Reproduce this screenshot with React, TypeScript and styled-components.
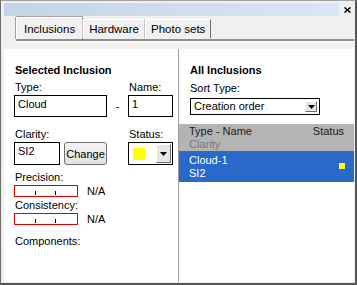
import React from "react";
import styled, { createGlobalStyle } from "styled-components";

const GlobalStyle = createGlobalStyle`
  html, body { margin: 0; padding: 0; background: #f0f0f0; }
  body {
    font-family: "Liberation Sans", Arial, sans-serif;
    font-size: 11px;
    color: #000;
  }
  * { box-sizing: border-box; }
`;

const Window = styled.div`
  width: 357px;
  height: 285px;
  background: #f0f0f0;
  border-top: 1px solid #a0a0a0;
  border-left: 1px solid #6a6a6a;
  border-right: 2px solid #555;
  border-bottom: 2px solid #555;
  padding: 2px 0 0 3px;
  display: flex;
  flex-direction: column;
`;

const TitleRow = styled.div`
  display: flex;
  align-items: center;
  height: 13px;
`;

const TitleBar = styled.div`
  width: 335px;
  height: 13px;
  background: linear-gradient(to right, #c4d4e6, #dae6f4);
`;

const Close = styled.div`
  margin-left: 5px;
  display: flex;
  align-items: center;
`;

const TabStrip = styled.div`
  margin: 1px 1px 0 12px;
  height: 24px;
  display: flex;
  align-items: flex-end;
  border-bottom: 2px solid #8e8e8e;
  box-shadow: 0 1px 0 #fff;
`;

const Tab = styled.div<{ $active?: boolean }>`
  height: ${(p) => (p.$active ? 22 : 19)}px;
  margin-bottom: ${(p) => (p.$active ? 0 : 1)}px;
  padding: 0 ${(p) => (p.$active ? 7 : 5)}px;
  display: flex;
  align-items: center;
  font-size: 11.5px;
  color: #000;
  background: #f0f0f0;
  border-top: 1px solid #fff;
  border-left: 1px solid #fff;
  border-right: 1px solid #6d6d6d;
  box-shadow: ${(p) =>
    p.$active ? "-1px 0 0 #a0a0a0, 0 -1px 0 #a0a0a0" : "-1px 0 0 #c8c8c8"};
`;

const Panels = styled.div`
  margin: 8px 1px 1px 0;
  flex: 1;
  display: flex;
  background: #fff;
`;

const LeftPanel = styled.div`
  width: 175px;
  padding: 15px 0 0 10px;
  display: flex;
  flex-direction: column;
  border-right: 1px solid #a0a0a0;
`;

const RightPanel = styled.div`
  flex: 1;
  padding-top: 15px;
  display: flex;
  flex-direction: column;
`;

const Heading = styled.div`
  font-weight: bold;
  line-height: 13px;
  padding-left: 1px;
`;

const Label = styled.div`
  line-height: 13px;
  padding-left: 1px;
`;

const FieldGrid = styled.div<{ $top: number }>`
  margin-top: ${(p) => p.$top}px;
  display: grid;
  grid-template-columns: 93px 21px 45px;
  row-gap: 1px;
  align-items: center;
`;

const TextBox = styled.div<{ $h: number }>`
  height: ${(p) => p.$h}px;
  border: 1px solid #000;
  padding: 2px 0 0 3px;
  line-height: 13px;
  background: #fff;
`;

const Dash = styled.div`
  text-align: center;
  line-height: 13px;
`;

const ClarityRow = styled.div`
  display: flex;
  gap: 4px;
`;

const SmallBox = styled(TextBox)`
  width: 46px;
`;

const ChangeButton = styled.div`
  width: 43px;
  height: 23px;
  border: 1px solid #6f6f6f;
  border-radius: 3px;
  background: linear-gradient(#f4f4f4, #e2e2e2);
  display: flex;
  align-items: center;
  justify-content: center;
  padding-top: 2px;
  line-height: 13px;
`;

const ColorCombo = styled.div`
  height: 23px;
  border: 1px solid #000;
  background: #fff;
  display: flex;
  align-items: center;
  padding: 0 1px 0 4px;
`;

const Swatch = styled.div`
  width: 12px;
  height: 12px;
  background: #ffff00;
`;

const DropButton = styled.div<{ $w: number; $h: number }>`
  margin-left: auto;
  width: ${(p) => p.$w}px;
  height: ${(p) => p.$h}px;
  background: #e6e6e6;
  border-top: 1px solid #fff;
  border-left: 1px solid #fff;
  border-right: 1px solid #6d6d6d;
  border-bottom: 1px solid #6d6d6d;
  display: flex;
  align-items: center;
  justify-content: center;
`;

const MeterRow = styled.div<{ $top: number }>`
  margin-top: ${(p) => p.$top}px;
  display: flex;
  align-items: center;
  gap: 9px;
`;

const Meter = styled.div`
  position: relative;
  width: 64px;
  height: 12px;
  border: 1px solid #e00000;
  background: #fff;
`;

const Tick = styled.div<{ $x: number }>`
  position: absolute;
  left: ${(p) => p.$x}px;
  bottom: 1px;
  width: 1px;
  height: 4px;
  background: #000;
`;

const Section = styled.div<{ $top: number }>`
  margin-top: ${(p) => p.$top}px;
`;

const RightInner = styled.div`
  padding-left: 10px;
  display: flex;
  flex-direction: column;
`;

const SortCombo = styled.div`
  margin: 3px 0 0 1px;
  width: 130px;
  height: 17px;
  border: 1px solid #000;
  display: flex;
  align-items: center;
  padding: 0 2px 0 3px;
  line-height: 13px;
`;

const ListHeader = styled.div`
  margin-top: 9px;
  height: 27px;
  background: #b4b4b4;
  display: flex;
  justify-content: space-between;
  padding: 1px 10px 0 10px;
  line-height: 13px;
  color: #1a1a1a;
`;

const Dim = styled.div`
  color: #787878;
`;

const ListRow = styled.div`
  height: 31px;
  background: #2a69c9;
  color: #fff;
  display: flex;
  align-items: center;
  justify-content: space-between;
  padding: 1px 9px 0 10px;
  line-height: 13px;
`;

const Dot = styled.div`
  width: 6px;
  height: 6px;
  background: #ffff00;
  margin-top: -2px;
`;

const Arrow = () => (
  <svg width="7" height="4" viewBox="0 0 7 4">
    <polygon points="0,0 7,0 3.5,4" fill="#000" />
  </svg>
);

export default function App() {
  return (
    <>
      <GlobalStyle />
      <Window>
        <TitleRow>
          <TitleBar />
          <Close>
            <svg width="7" height="6" viewBox="0 0 7 6">
              <path d="M0.5 0.5 L6.5 5.5 M6.5 0.5 L0.5 5.5" stroke="#000" strokeWidth="1.6" />
            </svg>
          </Close>
        </TitleRow>
        <TabStrip>
          <Tab $active>Inclusions</Tab>
          <Tab>Hardware</Tab>
          <Tab>Photo sets</Tab>
        </TabStrip>
        <Panels>
          <LeftPanel>
            <Heading>Selected Inclusion</Heading>
            <FieldGrid $top={4}>
              <Label>Type:</Label>
              <div />
              <Label>Name:</Label>
              <TextBox $h={22}>Cloud</TextBox>
              <Dash>-</Dash>
              <TextBox $h={22}>1</TextBox>
            </FieldGrid>
            <FieldGrid $top={11}>
              <Label>Clarity:</Label>
              <div />
              <Label>Status:</Label>
              <ClarityRow>
                <SmallBox $h={23}>SI2</SmallBox>
                <ChangeButton>Change</ChangeButton>
              </ClarityRow>
              <div />
              <ColorCombo>
                <Swatch />
                <DropButton $w={15} $h={19}>
                  <Arrow />
                </DropButton>
              </ColorCombo>
            </FieldGrid>
            <Section $top={6}>
              <Label>Precision:</Label>
            </Section>
            <MeterRow $top={1}>
              <Meter>
                <Tick $x={20} />
                <Tick $x={40} />
              </Meter>
              <span>N/A</span>
            </MeterRow>
            <Section $top={2}>
              <Label>Consistency:</Label>
            </Section>
            <MeterRow $top={1}>
              <Meter>
                <Tick $x={20} />
                <Tick $x={40} />
              </Meter>
              <span>N/A</span>
            </MeterRow>
            <Section $top={10}>
              <Label>Components:</Label>
            </Section>
          </LeftPanel>
          <RightPanel>
            <RightInner>
              <Heading>All Inclusions</Heading>
              <Section $top={5}>
                <Label>Sort Type:</Label>
              </Section>
              <SortCombo>
                Creation order
                <DropButton $w={12} $h={11}>
                  <Arrow />
                </DropButton>
              </SortCombo>
            </RightInner>
            <ListHeader>
              <div>
                <div>Type - Name</div>
                <Dim>Clarity</Dim>
              </div>
              <div>Status</div>
            </ListHeader>
            <ListRow>
              <div>
                <div>Cloud-1</div>
                <div>SI2</div>
              </div>
              <Dot />
            </ListRow>
          </RightPanel>
        </Panels>
      </Window>
    </>
  );
}
